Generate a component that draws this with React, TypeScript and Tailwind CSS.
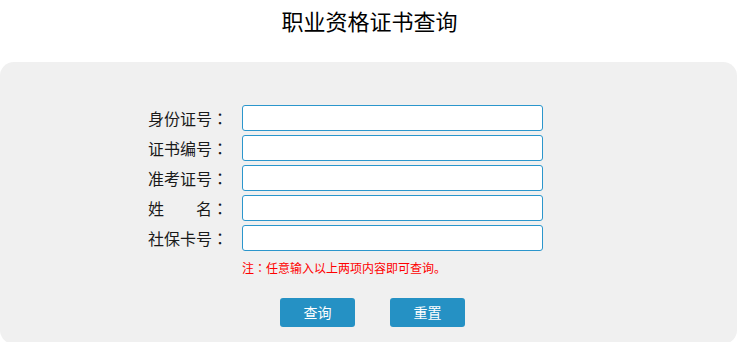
const fields = [
  { label: "身份证号", name: "idcard" },
  { label: "证书编号", name: "certno" },
  { label: "准考证号", name: "examno" },
  { label: "姓\u3000\u3000名", name: "name" },
  { label: "社保卡号", name: "sscard" },
];

// full-width colon drawn from the JP face, where it sits centred in its cell
function Colon() {
  return <span className="font-['Noto_Sans_CJK_JP',sans-serif]">：</span>;
}

export default function App() {
  return (
    <div className="w-[739px] bg-white font-['Microsoft_YaHei','Noto_Sans_CJK_SC',sans-serif] text-[#1a1a1a]">
      <div className="flex h-[62px] justify-center pt-[6px]">
        <h1 className="text-[22px] leading-[28px] font-normal text-black">
          职业资格证书查询
        </h1>
      </div>

      <div className="h-[282px] w-[737px] rounded-[14px] bg-[#f0f0f0] pt-[43px] pl-[148px]">
        <div className="flex flex-col gap-[4px]">
          {fields.map((f) => (
            <div key={f.name} className="flex items-center">
              <label className="w-[94px] text-[16px] leading-[20px] whitespace-pre">
                {f.label}
                <Colon />
              </label>
              <input
                name={f.name}
                type="text"
                className="h-[26px] w-[301px] rounded-[3px] border border-[#2b96cc] bg-white px-2 text-[14px] outline-none"
              />
            </div>
          ))}
        </div>

        <p className="mt-[9px] ml-[94px] text-[12px] leading-[16px] text-[#ff0000]">
          注<Colon />任意输入以上两项内容即可查询。
        </p>

        <div className="mt-[22px] ml-[132px] flex gap-[35px]">
          <button className="h-[29px] w-[75px] rounded-[3px] bg-[#2591c4] text-[14px] text-white">
            查询
          </button>
          <button className="h-[29px] w-[75px] rounded-[3px] bg-[#2591c4] text-[14px] text-white">
            重置
          </button>
        </div>
      </div>
    </div>
  );
}
